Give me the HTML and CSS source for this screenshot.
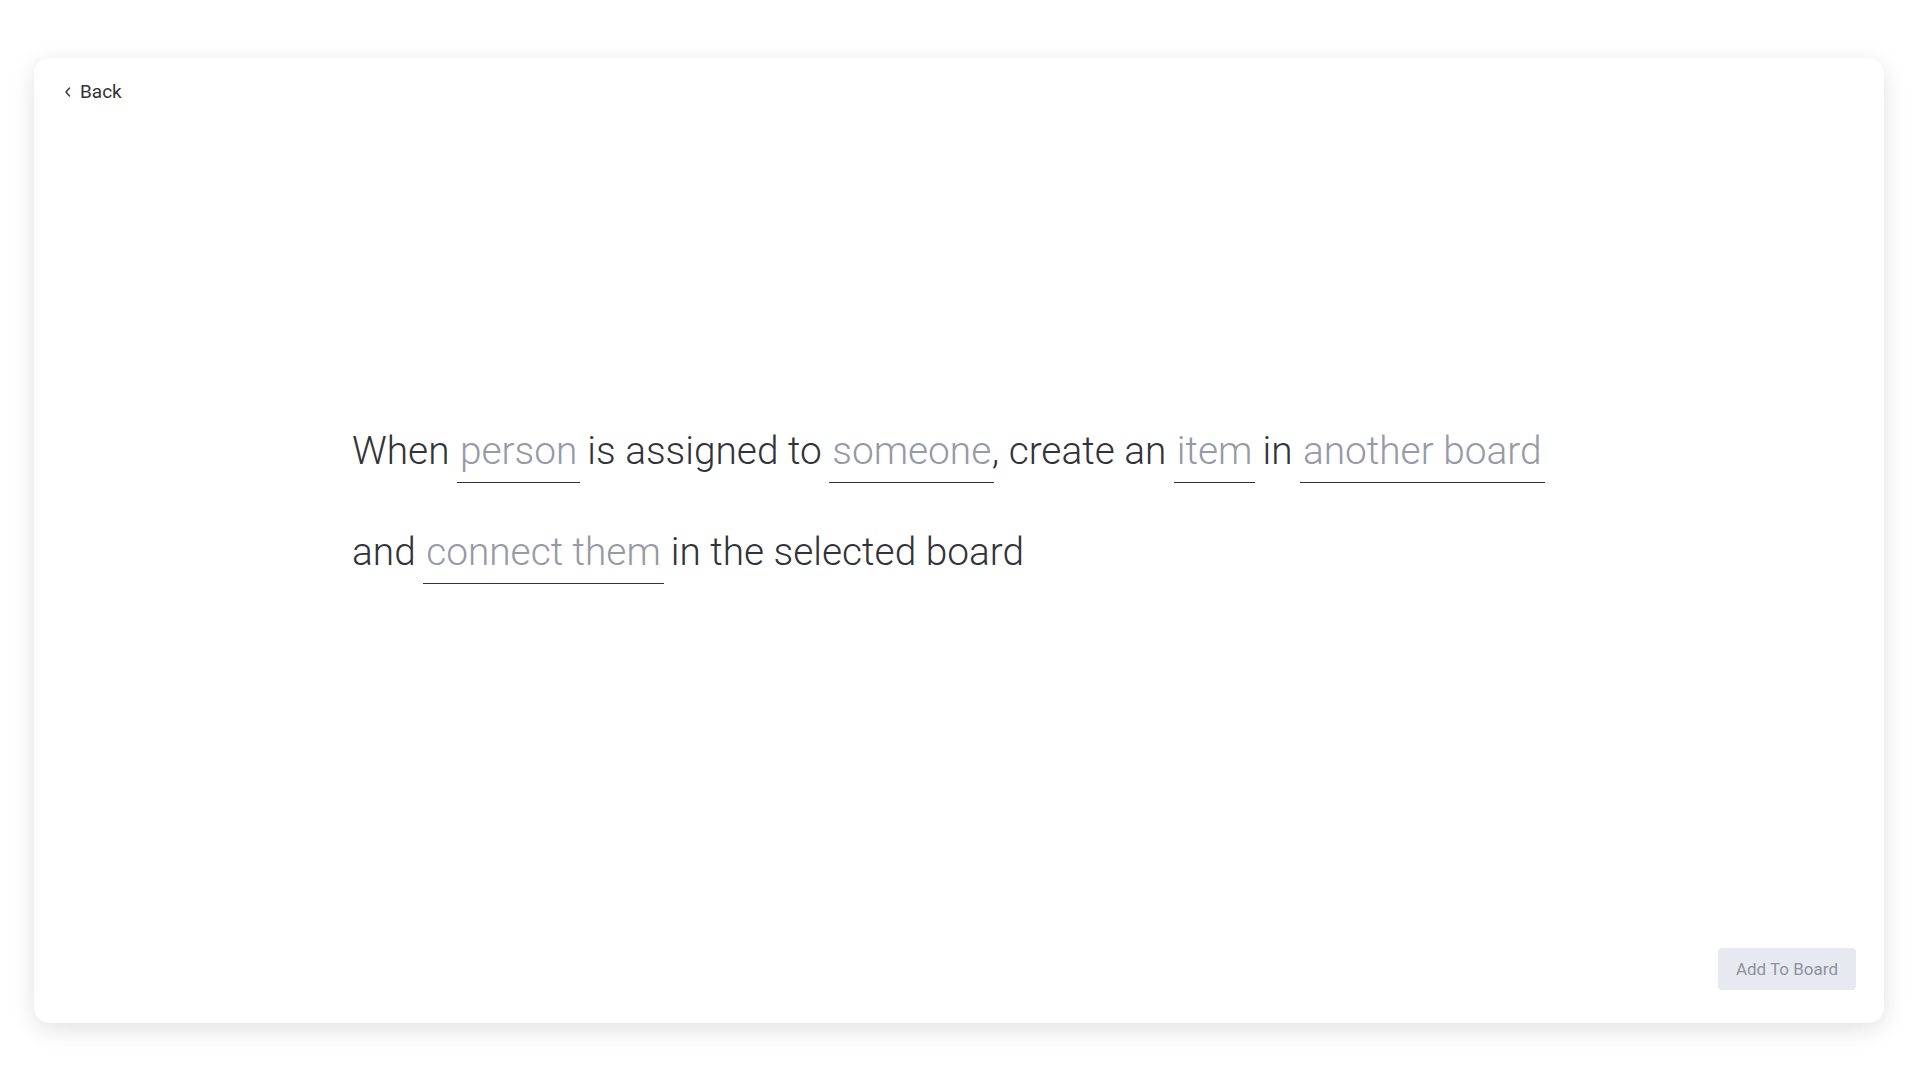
FILE: index.html
```html
<!DOCTYPE html>
<html lang="en">
<head>
<meta charset="utf-8">
<title>Recipe</title>
<link rel="stylesheet" href="styles.css">
</head>
<body>
<div class="card">
  <div class="header">
    <a class="back" href="#">
      <svg class="chev" width="8" height="10" viewBox="0 0 8 10"><polyline points="5.5,1 2,5 5.5,9" fill="none" stroke="#323338" stroke-width="1.4" stroke-linecap="round" stroke-linejoin="round"/></svg>
      <span>Back</span>
    </a>
  </div>
  <div class="main">
    <p class="sentence">When <span class="field">person</span> is assigned to <span class="field">someone</span>, create an <span class="field">item</span> in <span class="field">another board</span> and <span class="field">connect them</span> in the selected board</p>
  </div>
  <div class="footer">
    <button class="add">Add To Board</button>
  </div>
</div>
</body>
</html>
```
FILE: styles.css
```css
html, body {
  margin: 0;
  padding: 0;
  background: #ffffff;
  font-family: Roboto, "Liberation Sans", sans-serif;
}
body {
  padding: 58px 36px 57px 34px;
  box-sizing: border-box;
  height: 1080px;
}
.card {
  height: 965px;
  background: #fff;
  border-radius: 16px;
  box-shadow: 0 6px 24px rgba(0, 0, 0, 0.12);
  display: flex;
  flex-direction: column;
  box-sizing: border-box;
  padding: 23px 28px 33px 30px;
}
.header {
  display: flex;
}
.back {
  display: flex;
  align-items: center;
  gap: 8px;
  color: #323338;
  text-decoration: none;
  font-size: 19px;
  line-height: 21px;
}
.chev {
  display: block;
  margin-top: 1px;
}
.main {
  flex: 1;
}
.sentence {
  margin: 298px 0 0 288px;
  width: 1240px;
  font-size: 38.8px;
  font-weight: 300;
  line-height: 101px;
  color: #323338;
}
.field {
  display: inline-block;
  line-height: 46px;
  padding: 0 3px 8px;
  margin: 0 -2.5px 0 -2px;
  border-bottom: 1px solid #323338;
  color: #9699a6;
}
.footer {
  display: flex;
  justify-content: flex-end;
}
.add {
  height: 42px;
  padding: 0 18px;
  border: none;
  border-radius: 4px;
  background: #e6e9ef;
  color: #8f919d;
  font-family: Roboto, "Liberation Sans", sans-serif;
  font-size: 17px;
}
```
